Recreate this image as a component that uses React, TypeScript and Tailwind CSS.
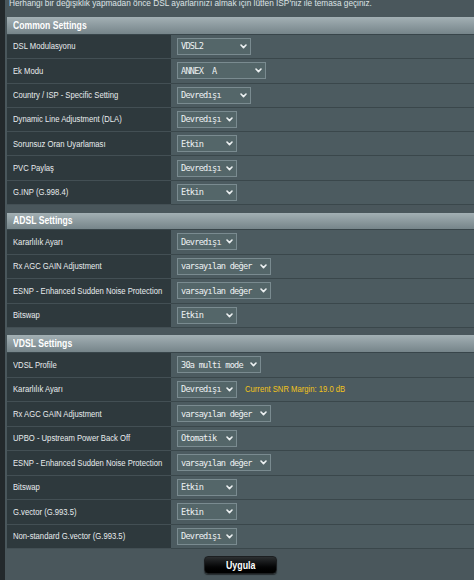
import React from "react";

type Row = { label: string; value: string; w: number; extra?: string };

const common: Row[] = [
  { label: "DSL Modulasyonu", value: "VDSL2", w: 74 },
  { label: "Ek Modu", value: "ANNEX  A", w: 89 },
  { label: "Country / ISP - Specific Setting", value: "Devredışı", w: 74 },
  { label: "Dynamic Line Adjustment (DLA)", value: "Devredışı", w: 60 },
  { label: "Sorunsuz Oran Uyarlaması", value: "Etkin", w: 60 },
  { label: "PVC Paylaş", value: "Devredışı", w: 60 },
  { label: "G.INP (G.998.4)", value: "Etkin", w: 60 },
];

const adsl: Row[] = [
  { label: "Kararlılık Ayarı", value: "Devredışı", w: 60 },
  { label: "Rx AGC GAIN Adjustment", value: "varsayılan değer", w: 94 },
  { label: "ESNP - Enhanced Sudden Noise Protection", value: "varsayılan değer", w: 94 },
  { label: "Bitswap", value: "Etkin", w: 60 },
];

const vdsl: Row[] = [
  { label: "VDSL Profile", value: "30a multi mode", w: 84 },
  { label: "Kararlılık Ayarı", value: "Devredışı", w: 60, extra: "Current SNR Margin: 19.0 dB" },
  { label: "Rx AGC GAIN Adjustment", value: "varsayılan değer", w: 94 },
  { label: "UPBO - Upstream Power Back Off", value: "Otomatik", w: 60 },
  { label: "ESNP - Enhanced Sudden Noise Protection", value: "varsayılan değer", w: 94 },
  { label: "Bitswap", value: "Etkin", w: 60 },
  { label: "G.vector (G.993.5)", value: "Etkin", w: 60 },
  { label: "Non-standard G.vector (G.993.5)", value: "Devredışı", w: 60 },
];

const sans = "font-['Liberation_Sans',Arial,sans-serif]";

function Chevron() {
  return (
    <svg width="7" height="5" viewBox="0 0 7 5" className="shrink-0">
      <path d="M1 1 L3.5 3.6 L6 1" fill="none" stroke="#eef2f3" strokeWidth="1.6" strokeLinecap="round" strokeLinejoin="round" />
    </svg>
  );
}

function Select({ value, w }: { value: string; w: number }) {
  return (
    <div
      className="h-[17px] flex items-center justify-between pl-[3px] pr-[3px] bg-[#546669] border border-[#7a8b90] shrink-0"
      style={{ width: w }}
    >
      <span className="font-['DejaVu_Sans_Mono',monospace] text-[8.6px] tracking-[-0.75px] text-[#eef2f3] whitespace-pre leading-none">
        {value}
      </span>
      <Chevron />
    </div>
  );
}

function Section({ title, rows, rowH, headH }: { title: string; rows: Row[]; rowH: string; headH: string }) {
  return (
    <div className="flex flex-col">
      <div
        className={`${headH} flex items-center pl-[6px] bg-gradient-to-b from-[#a3b0b4] to-[#76858a] border-b border-[#38454a]`}
      >
        <span className={`${sans} inline-block origin-left scale-x-[0.82] font-bold text-[10.5px] text-white whitespace-nowrap`}>{title}</span>
      </div>
      {rows.map((r, i) => (
        <div key={i} className={`${rowH} flex border-b border-[#3a474b]`}>
          <div className="w-[164px] shrink-0 bg-[#2e393d] flex items-center pl-[6px] border-b border-[#434f54] -mb-px">
            <span className={`${sans} inline-block origin-left scale-x-[0.8] text-[9.6px] text-[#e8ecee] whitespace-nowrap`}>{r.label}</span>
          </div>
          <div className="flex-1 bg-[#4c5b60] flex items-center pl-[6px] gap-[8px]">
            <Select value={r.value} w={r.w} />
            {r.extra && (
              <span className={`${sans} inline-block origin-left scale-x-[0.8] text-[9.6px] text-[#f2c31a] whitespace-nowrap`}>{r.extra}</span>
            )}
          </div>
        </div>
      ))}
    </div>
  );
}

export default function App() {
  return (
    <div className="w-[474px] h-[580px] bg-[#4a575c] flex overflow-hidden">
      <div className="w-[5px] shrink-0 bg-[#23292c]" />
      <div className="flex-1 flex flex-col pl-[2px]">
        <div className="h-[17px] overflow-hidden">
          <div className={`${sans} block w-max origin-left scale-x-[0.87] text-[9.5px] text-[#dde3e5] whitespace-nowrap ml-[2px] leading-[11px] -mt-[3px]`}>
            Herhangi bir değişiklik yapmadan önce DSL ayarlarınızı almak için lütfen ISP'niz ile temasa geçiniz.
          </div>
        </div>
        <Section title="Common Settings" rows={common} rowH="h-[24.3px]" headH="h-[18px]" />
        <div className="h-[8px]" />
        <Section title="ADSL Settings" rows={adsl} rowH="h-[24.5px]" headH="h-[17px]" />
        <div className="h-[7px]" />
        <Section title="VDSL Settings" rows={vdsl} rowH="h-[24.5px]" headH="h-[18px]" />
        <div className="flex pl-[197px] pt-[7px]">
          <div className="w-[73px] h-[18px] rounded-[4px] bg-gradient-to-b from-[#2c2f31] via-[#0c0d0e] to-[#000000] border border-[#1c1f21] flex items-center justify-center shadow-[0_1px_1px_rgba(0,0,0,0.5)]">
            <span className={`${sans} inline-block scale-x-[0.88] font-bold text-[10px] text-white`}>Uygula</span>
          </div>
        </div>
      </div>
    </div>
  );
}
